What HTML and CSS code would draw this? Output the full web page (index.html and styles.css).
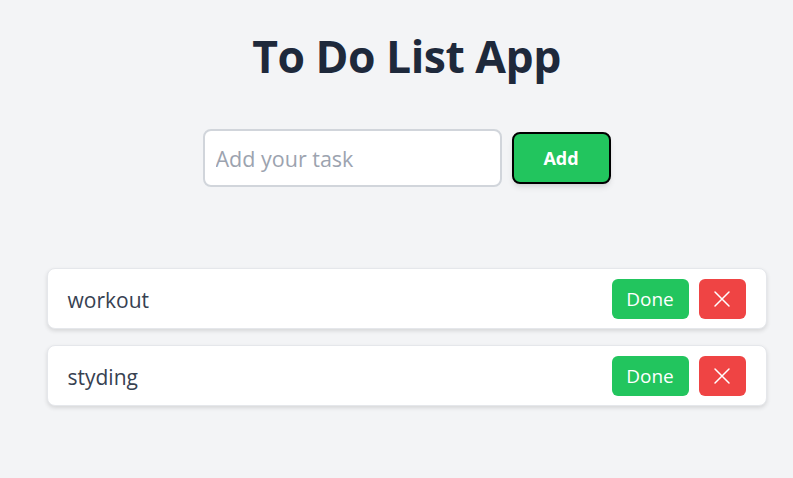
FILE: index.html
```html
<!DOCTYPE html>
<html>
<head>
<meta charset="utf-8">
<link rel="stylesheet" href="styles.css">
</head>
<body>
<div class="page">
  <h1 class="title">To Do List App</h1>
  <form class="add-form" onsubmit="return false">
    <input class="task-input" type="text" placeholder="Add your task">
    <button class="add-btn" type="submit">Add</button>
  </form>
  <ul class="list">
    <li class="item">
      <span class="item-text">workout</span>
      <div class="actions">
        <button class="done-btn">Done</button>
        <button class="del-btn" aria-label="Delete"><svg width="18" height="18" viewBox="0 0 18 18"><path d="M2 2L16 16M16 2L2 16" stroke="#fff" stroke-width="1.5" stroke-linecap="round"/></svg></button>
      </div>
    </li>
    <li class="item">
      <span class="item-text">styding</span>
      <div class="actions">
        <button class="done-btn">Done</button>
        <button class="del-btn" aria-label="Delete"><svg width="18" height="18" viewBox="0 0 18 18"><path d="M2 2L16 16M16 2L2 16" stroke="#fff" stroke-width="1.5" stroke-linecap="round"/></svg></button>
      </div>
    </li>
  </ul>
</div>
</body>
</html>
```

FILE: styles.css
```css
* { box-sizing: border-box; }
html, body { margin: 0; padding: 0; }
body {
  background: #f3f4f6;
  font-family: "Open Sans", "Noto Sans", sans-serif;
  color: #1f2937;
  height: 478px;
  overflow: hidden;
}
.page {
  padding: 28px 0 0 20px;
  display: flex;
  flex-direction: column;
  align-items: center;
}
.title {
  margin: 0;
  font-size: 44.5px;
  line-height: 56px;
  font-weight: 700;
  color: #1e293b;
  letter-spacing: -0.5px;
}
.add-form {
  margin-top: 45px;
  display: flex;
  align-items: center;
  gap: 10px;
}
.task-input {
  width: 299px;
  height: 58px;
  border: 2px solid #d1d5db;
  border-radius: 8px;
  padding: 0 11px;
  font-family: inherit;
  font-size: 21.5px;
  color: #374151;
  background: #fff;
  outline: none;
}
.task-input::placeholder { color: #9ca3af; }
.add-btn {
  width: 99px;
  height: 52px;
  background: #22c55e;
  border: 2px solid #000;
  border-radius: 8px;
  color: #fff;
  font-family: inherit;
  font-size: 18px;
  font-weight: 700;
  box-shadow: 0 4px 6px -1px rgba(0,0,0,0.1), 0 2px 4px -2px rgba(0,0,0,0.1);
}
.list {
  list-style: none;
  margin: 81px 0 0;
  padding: 0;
  width: 720px;
  display: flex;
  flex-direction: column;
  gap: 16px;
}
.item {
  height: 61px;
  background: #fff;
  border: 1px solid #e5e7eb;
  border-radius: 8px;
  box-shadow: 0 2px 4px rgba(0,0,0,0.12);
  display: flex;
  align-items: center;
  justify-content: space-between;
  padding: 0 20px;
}
.item-text {
  font-size: 21px;
  color: #374151;
  padding-top: 2px;
}
.actions {
  display: flex;
  gap: 10px;
}
.done-btn {
  width: 77px;
  height: 40px;
  background: #22c55e;
  color: #fff;
  border: none;
  border-radius: 6px;
  font-family: inherit;
  font-size: 19px;
  padding: 0;
}
.del-btn {
  width: 47px;
  height: 40px;
  background: #ef4444;
  border: none;
  border-radius: 6px;
  display: flex;
  align-items: center;
  justify-content: center;
  padding: 0;
}
```
